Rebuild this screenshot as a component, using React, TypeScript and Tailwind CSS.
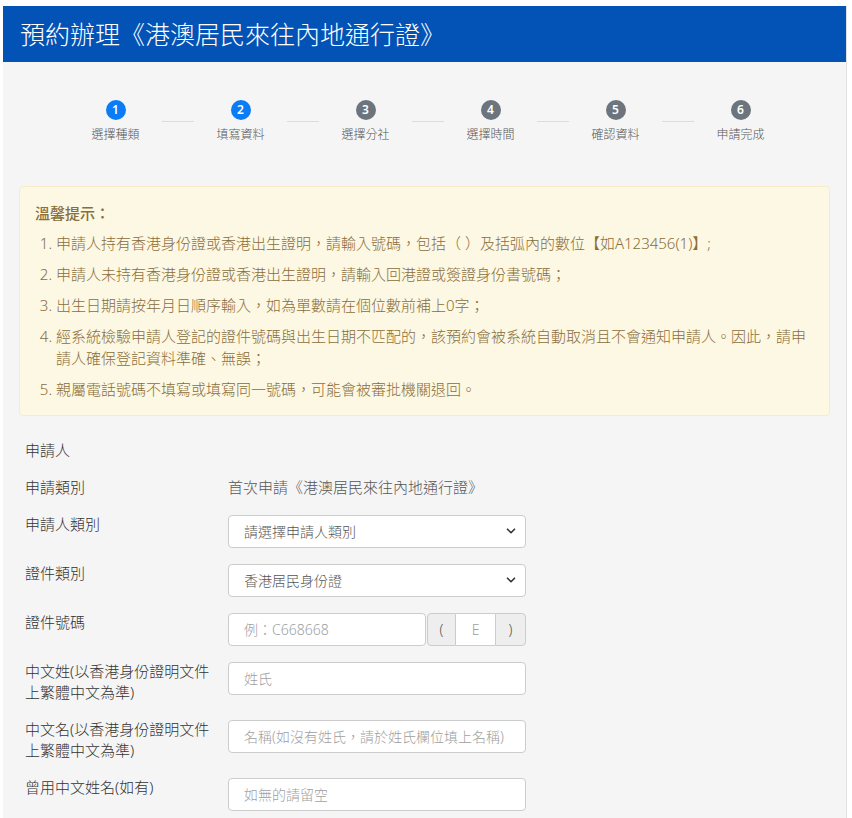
import React from "react";

const steps = [
  { n: 1, label: "選擇種類", active: true },
  { n: 2, label: "填寫資料", active: true },
  { n: 3, label: "選擇分社", active: false },
  { n: 4, label: "選擇時間", active: false },
  { n: 5, label: "確認資料", active: false },
  { n: 6, label: "申請完成", active: false },
];

const tips = [
  "申請人持有香港身份證或香港出生證明，請輸入號碼，包括（ ）及括弧內的數位【如A123456(1)】;",
  "申請人未持有香港身份證或香港出生證明，請輸入回港證或簽證身份書號碼；",
  "出生日期請按年月日順序輸入，如為單數請在個位數前補上0字；",
  "經系統檢驗申請人登記的證件號碼與出生日期不匹配的，該預約會被系統自動取消且不會通知申請人。因此，請申請人確保登記資料準確、無誤；",
  "親屬電話號碼不填寫或填寫同一號碼，可能會被審批機關退回。",
];

function Chevron() {
  return (
    <svg
      className="pointer-events-none absolute right-[10px] top-1/2 -translate-y-1/2"
      width="10"
      height="10"
      viewBox="0 0 10 10"
    >
      <path d="M1.5 3.2 L5 6.7 L8.5 3.2" fill="none" stroke="#333" strokeWidth="1.6" strokeLinecap="round" strokeLinejoin="round" />
    </svg>
  );
}

function Label({ children }: { children: React.ReactNode }) {
  return (
    <div className="w-[203px] shrink-0 pr-[13px] text-[15px] font-light leading-[21.5px] text-[#333] -mt-px">
      {children}
    </div>
  );
}

function Select({ value }: { value: string }) {
  return (
    <div className="relative w-[298px]">
      <select
        defaultValue={value}
        className="h-[33px] w-full appearance-none rounded-[4px] border border-[#cccccc] bg-white pl-[15px] pr-[28px] text-[14px] font-light text-[#555] outline-none"
      >
        <option value={value}>{value}</option>
      </select>
      <Chevron />
    </div>
  );
}

function Input({ placeholder, w = "w-[298px]" }: { placeholder: string; w?: string }) {
  return (
    <input
      placeholder={placeholder}
      className={`h-[33px] ${w} rounded-[4px] border border-[#cccccc] bg-white pl-[15px] text-[14px] font-light text-[#555] outline-none placeholder:text-[#a0a0a0]`}
    />
  );
}

export default function App() {
  return (
    <div
      className="min-h-screen bg-white pl-[3px] pr-[5px] pt-[6px]"
      style={{ fontFamily: '"Noto Sans", "Noto Sans CJK TC", sans-serif' }}
    >
      <div className="border-r border-[#e2e2e2] bg-[#f5f5f5] pb-[40px]">
        <header className="flex h-[56px] items-center bg-[#0353b7] pl-[17px]">
          <h1 className="text-[25px] font-light leading-none text-white">
            預約辦理《港澳居民來往內地通行證》
          </h1>
        </header>

        <div className="px-[16px]">
          {/* Steps */}
          <div className="flex justify-center pl-[7px] pt-[38px]">
            {steps.map((s, i) => (
              <React.Fragment key={s.n}>
                {i > 0 && <div className="mt-[21px] h-px w-8 bg-[#dcdcdc]" />}
                <div className="flex w-[93px] flex-col items-center">
                  <div
                    className={`flex h-5 w-5 items-center justify-center rounded-full text-[12px] font-semibold leading-none text-white ${
                      s.active ? "bg-[#0a7cf5]" : "bg-[#6c757d]"
                    }`}
                  >
                    {s.n}
                  </div>
                  <div className="mt-[7px] text-[12px] font-light leading-[16px] text-[#555]">{s.label}</div>
                </div>
              </React.Fragment>
            ))}
          </div>

          {/* Alert */}
          <div className="mt-[43px] rounded-[4px] border border-[#f7ecc8] bg-[#fcf8e3] px-[15px] pb-[15px] pt-[15px] text-[#8a6d3b]">
            <div className="text-[15px] font-medium leading-[22px]">溫馨提示：</div>
            <ol className="mt-[8px] list-decimal pl-[21px] text-[15px] font-light leading-[22px]">
              {tips.map((t, i) => (
                <li key={i} className={i > 0 ? "mt-[9px]" : ""}>
                  {t}
                </li>
              ))}
            </ol>
          </div>

          {/* Form */}
          <div className="pl-[6px] pt-[24px]">
            <div className="mb-[17px] text-[15px] font-light leading-[21px] text-[#333]">申請人</div>

            <div className="mb-[16px] flex">
              <Label>申請類別</Label>
              <div className="text-[15px] font-light leading-[21px] text-[#555] -mt-px">首次申請《港澳居民來往內地通行證》</div>
            </div>

            <div className="mb-[16px] flex items-start">
              <Label>申請人類別</Label>
              <Select value="請選擇申請人類別" />
            </div>

            <div className="mb-[16px] flex items-start">
              <Label>證件類別</Label>
              <Select value="香港居民身份證" />
            </div>

            <div className="mb-[16px] flex items-start">
              <Label>證件號碼</Label>
              <div className="flex">
                <Input placeholder="例：C668668" w="w-[198px]" />
                <div className="ml-[1px] flex h-[33px]">
                  <span className="flex w-[29px] items-center justify-center rounded-l-[4px] border border-[#cccccc] bg-[#eeeeee] text-[14px] font-light text-[#555]">
                    (
                  </span>
                  <input
                    placeholder="E"
                    className="h-[33px] w-[39px] border-y border-[#cccccc] bg-white text-center text-[14px] font-light text-[#555] outline-none placeholder:text-[#a0a0a0]"
                  />
                  <span className="flex w-[31px] items-center justify-center rounded-r-[4px] border border-[#cccccc] bg-[#eeeeee] text-[14px] font-light text-[#555]">
                    )
                  </span>
                </div>
              </div>
            </div>

            <div className="mb-[16px] flex items-start">
              <Label>中文姓(以香港身份證明文件上繁體中文為準)</Label>
              <Input placeholder="姓氏" />
            </div>

            <div className="mb-[16px] flex items-start">
              <Label>中文名(以香港身份證明文件上繁體中文為準)</Label>
              <Input placeholder="名稱(如沒有姓氏，請於姓氏欄位填上名稱)" />
            </div>

            <div className="mb-[16px] flex items-start">
              <Label>曾用中文姓名(如有)</Label>
              <Input placeholder="如無的請留空" />
            </div>
          </div>
        </div>
      </div>
    </div>
  );
}
